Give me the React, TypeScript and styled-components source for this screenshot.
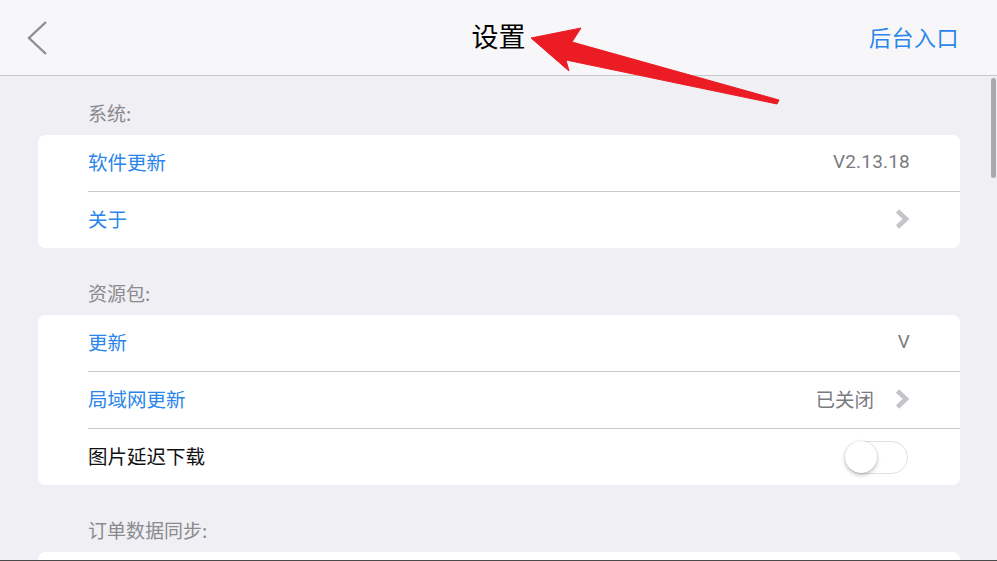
import { ReactNode, useState } from "react";
import styled, { createGlobalStyle } from "styled-components";

const COLOR = {
    PAGE: "#efeff4",
    HEADER: "#f7f7f9",
    HAIRLINE: "#c8c7cc",
    BLUE: "#2a86ea",
    LABEL: "#8a8a8f",
    VALUE: "#7b7b80",
    CHEVRON: "#c4c4c9",
    ARROW: "#ec1c24",
};

const FONT = `"Noto Sans CJK SC", "Noto Sans", Roboto, sans-serif`;

const GlobalStyle = createGlobalStyle`
    html, body {
        margin: 0;
        padding: 0;
        background: ${COLOR.PAGE};
        overflow: hidden;
    }
    * {
        box-sizing: border-box;
    }
`;

const Screen = styled.div`
    position: relative;
    width: 997px;
    height: 561px;
    overflow: hidden;
    background: ${COLOR.PAGE};
    font-family: ${FONT};
    border-bottom: 1px solid #4a4a4a;
`;

const Header = styled.header`
    display: grid;
    grid-template-columns: 1fr auto 1fr;
    align-items: center;
    height: 76px;
    padding: 0 39px 4px 39px;
    background: ${COLOR.HEADER};
    border-bottom: 1px solid ${COLOR.HAIRLINE};
`;

const BackButton = styled.button`
    justify-self: start;
    display: flex;
    align-items: center;
    margin: 4px 0 0 -13px;
    padding: 0;
    border: 0;
    background: none;
    cursor: pointer;
`;

const Title = styled.h1`
    margin: 0;
    font-size: 27px;
    font-weight: 400;
    color: #000;
`;

const HeaderLink = styled.a`
    justify-self: end;
    margin-right: -1px;
    font-size: 22px;
    color: ${COLOR.BLUE};
    text-decoration: none;
    letter-spacing: 0.5px;
`;

const Content = styled.main`
    display: flex;
    flex-direction: column;
    padding: 0 37px 0 38px;
`;

const Section = styled.section<{ first?: boolean }>`
    display: flex;
    flex-direction: column;
    padding-top: ${({ first }) => (first ? 26 : 34)}px;
`;

const SectionLabel = styled.div`
    height: 26px;
    line-height: 22px;
    margin: 0 0 7px 50px;
    font-size: 19px;
    color: ${COLOR.LABEL};
`;

const Card = styled.div`
    display: flex;
    flex-direction: column;
    background: #fff;
    border-radius: 7px;
    overflow: hidden;
`;

const Row = styled.div<{ divided?: boolean }>`
    display: flex;
    align-items: center;
    justify-content: space-between;
    height: ${({ divided }) => (divided ? 57 : 56)}px;
    margin-left: 50px;
    padding: 0 50px 3px 0;
    border-top: ${({ divided }) =>
        divided ? `1px solid ${COLOR.HAIRLINE}` : "none"};
`;

const RowTitle = styled.span<{ plain?: boolean }>`
    font-size: 19.5px;
    color: ${({ plain }) => (plain ? "#111" : COLOR.BLUE)};
`;

const RowAccessory = styled.div`
    display: flex;
    align-items: center;
    gap: 21px;
    font-size: 19.5px;
    color: ${COLOR.VALUE};
`;

const Version = styled.span`
    font-family: Roboto, "Noto Sans", sans-serif;
    font-size: 19px;
    color: ${COLOR.VALUE};
    letter-spacing: 0.2px;
`;

const SwitchTrack = styled.button<{ on: boolean }>`
    position: relative;
    width: 63px;
    height: 33px;
    padding: 0;
    margin: 3px 2px 0 0;
    border-radius: 17px;
    border: 1.5px solid #e0e0e4;
    background: ${({ on }) => (on ? "#4cd964" : "#fff")};
    cursor: pointer;
`;

const SwitchKnob = styled.span<{ on: boolean }>`
    position: absolute;
    top: -1px;
    left: ${({ on }) => (on ? "30px" : "-1px")};
    width: 32px;
    height: 32px;
    border-radius: 50%;
    background: #fff;
    box-shadow: 0 2px 4px rgba(0, 0, 0, 0.25), 0 0 0 0.5px rgba(0, 0, 0, 0.08);
`;

const Scrollbar = styled.div`
    position: absolute;
    top: 78px;
    right: 1px;
    width: 5px;
    height: 100px;
    border-radius: 3px;
    background: #a9a9ad;
`;

const Annotation = styled.svg`
    position: absolute;
    top: 0;
    left: 0;
    pointer-events: none;
`;

const Chevron = () => (
    <svg width="15" height="22" viewBox="0 0 15 22">
        <path
            d="M2.5 3 L11 11 L2.5 19"
            fill="none"
            stroke={COLOR.CHEVRON}
            strokeWidth="4.6"
            strokeLinejoin="miter"
        />
    </svg>
);

const BackChevron = () => (
    <svg width="24" height="36" viewBox="0 0 24 36">
        <path
            d="M20 2 L3 18 L20 34"
            fill="none"
            stroke="#8e8e93"
            strokeWidth="2.4"
        />
    </svg>
);

interface SettingRowProps {
    title: string;
    plain?: boolean;
    divided?: boolean;
    children?: ReactNode;
}

const SettingRow = ({ title, plain, divided, children }: SettingRowProps) => (
    <Row divided={divided}>
        <RowTitle plain={plain}>{title}</RowTitle>
        <RowAccessory>{children}</RowAccessory>
    </Row>
);

const Switch = () => {
    const [on, setOn] = useState(false);
    return (
        <SwitchTrack on={on} onClick={() => setOn(!on)}>
            <SwitchKnob on={on} />
        </SwitchTrack>
    );
};

const App = () => {
    return (
        <Screen>
            <GlobalStyle />
            <Header>
                <BackButton>
                    <BackChevron />
                </BackButton>
                <Title>设置</Title>
                <HeaderLink>后台入口</HeaderLink>
            </Header>
            <Content>
                <Section first>
                    <SectionLabel>系统:</SectionLabel>
                    <Card>
                        <SettingRow title="软件更新">
                            <Version>V2.13.18</Version>
                        </SettingRow>
                        <SettingRow title="关于" divided>
                            <Chevron />
                        </SettingRow>
                    </Card>
                </Section>
                <Section>
                    <SectionLabel>资源包:</SectionLabel>
                    <Card>
                        <SettingRow title="更新">
                            <Version>V</Version>
                        </SettingRow>
                        <SettingRow title="局域网更新" divided>
                            <span>已关闭</span>
                            <Chevron />
                        </SettingRow>
                        <SettingRow title="图片延迟下载" plain divided>
                            <Switch />
                        </SettingRow>
                    </Card>
                </Section>
                <Section>
                    <SectionLabel>订单数据同步:</SectionLabel>
                    <Card>
                        <SettingRow title="" />
                    </Card>
                </Section>
            </Content>
            <Scrollbar />
            <Annotation width="997" height="561" viewBox="0 0 997 561">
                <polygon
                    points="531,38 581,28 572,42 779,100 777,104 566,60 569,71"
                    fill={COLOR.ARROW}
                    stroke={COLOR.ARROW}
                    strokeWidth="1"
                    strokeLinejoin="round"
                />
            </Annotation>
        </Screen>
    );
};

export default App;
